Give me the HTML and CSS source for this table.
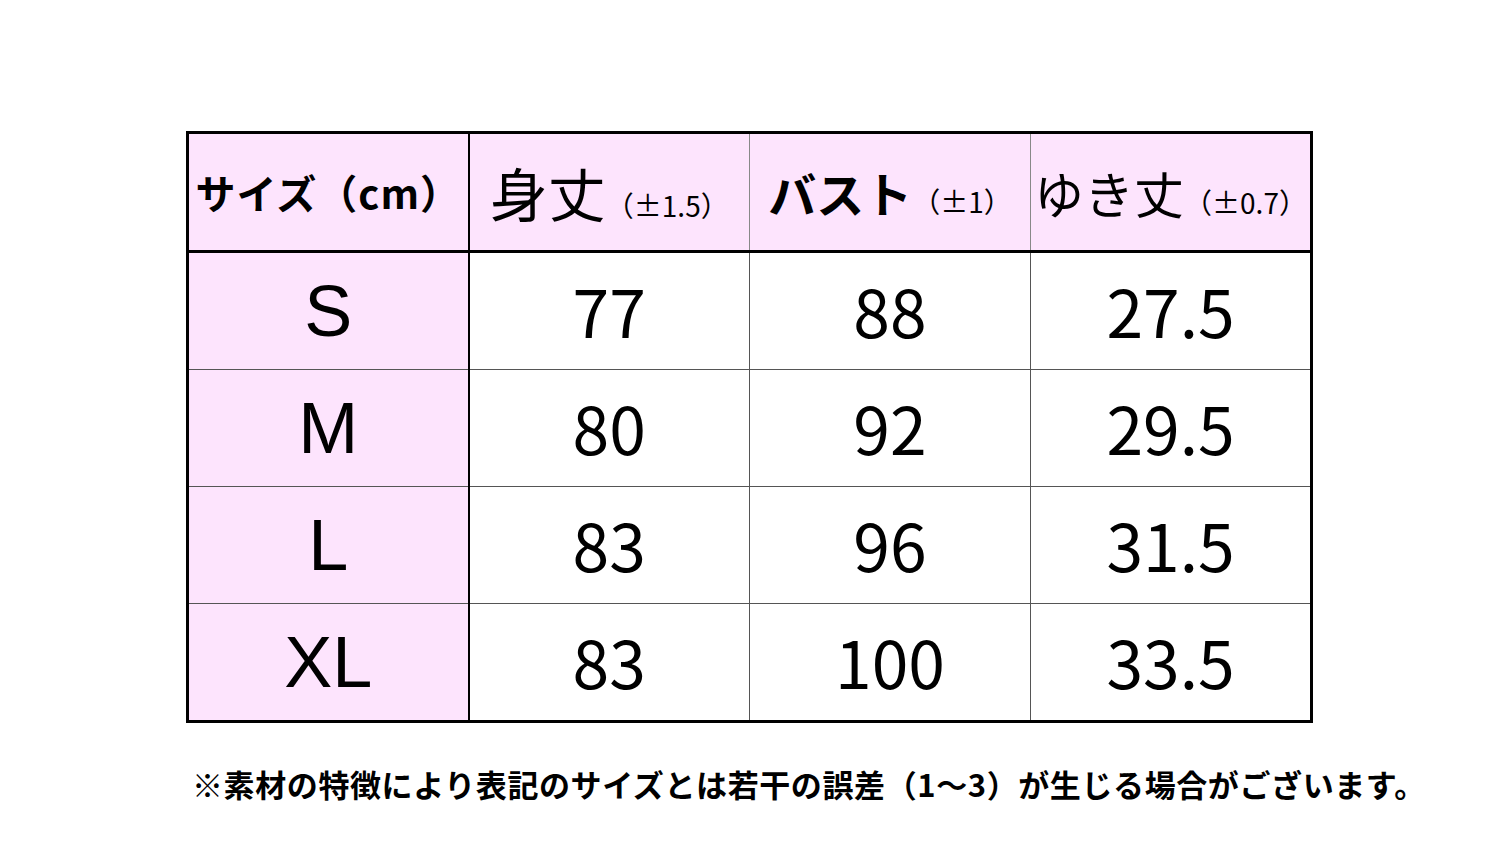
FILE: index.html
```html
<!DOCTYPE html>
<html lang="ja">
<head>
<meta charset="utf-8">
<link rel="stylesheet" href="styles.css">
</head>
<body>
<main class="page">
  <table class="size-table">
    <thead>
      <tr>
        <th class="col-size"><span class="h-mid">サイズ（cm）</span></th>
        <th><span class="h-big">身丈</span><span class="h-tol">（±1.5）</span></th>
        <th><span class="h-bust">バスト</span><span class="h-tol">（±1）</span></th>
        <th><span class="h-sleeve">ゆき丈</span><span class="h-tol">（±0.7）</span></th>
      </tr>
    </thead>
    <tbody>
      <tr><th class="col-size">S</th><td>77</td><td>88</td><td>27.5</td></tr>
      <tr><th class="col-size">M</th><td>80</td><td>92</td><td>29.5</td></tr>
      <tr><th class="col-size">L</th><td>83</td><td>96</td><td>31.5</td></tr>
      <tr><th class="col-size">XL</th><td>83</td><td>100</td><td>33.5</td></tr>
    </tbody>
  </table>
  <p class="note">※素材の特徴により表記のサイズとは若干の誤差（1～3）が生じる場合がございます。</p>
</main>
</body>
</html>
```

FILE: styles.css
```css
html, body {
  margin: 0;
  padding: 0;
  background: #ffffff;
}

.page {
  padding: 131px 0 0 186px;
  font-family: "Noto Sans CJK JP", "Noto Sans", sans-serif;
  color: #000;
}

.size-table {
  border-collapse: collapse;
  border: 3px solid #000;
  table-layout: fixed;
  width: 1127px;
}

.size-table th,
.size-table td {
  text-align: center;
  vertical-align: middle;
  padding: 0;
  border: 1px solid #555;
  line-height: 1;
}

.size-table thead th {
  height: 116px;
  background: #fde4fd;
  border-bottom: 3px solid #000;
  border-left: 1px solid #888;
  border-right: 1px solid #888;
  font-weight: normal;
  white-space: nowrap;
}

.size-table tbody th {
  height: 116px;
}

.size-table tbody td {
  height: 111px;
  padding-bottom: 5px;
}

.size-table .col-size {
  background: #fde4fd;
  border-right: 2px solid #000;
}

.size-table thead .col-size {
  border-right: 2px solid #000;
}

.size-table tbody th {
  font-family: "Liberation Sans", Arial, sans-serif;
  font-weight: normal;
  font-size: 72px;
}

.size-table tbody td {
  font-family: "Noto Sans CJK JP", sans-serif;
  font-size: 66px;
}

.h-mid {
  font-size: 40px;
  font-weight: bold;
  letter-spacing: 1px;
}

.h-big {
  font-size: 58px;
}

.h-bust {
  font-size: 48px;
  font-weight: bold;
}

.h-sleeve {
  font-size: 50px;
}

.h-tol {
  font-size: 28px;
}

.note {
  margin: 38px 0 0 6px;
  font-size: 31px;
  font-weight: bold;
  letter-spacing: 0.6px;
  white-space: nowrap;
}
```
